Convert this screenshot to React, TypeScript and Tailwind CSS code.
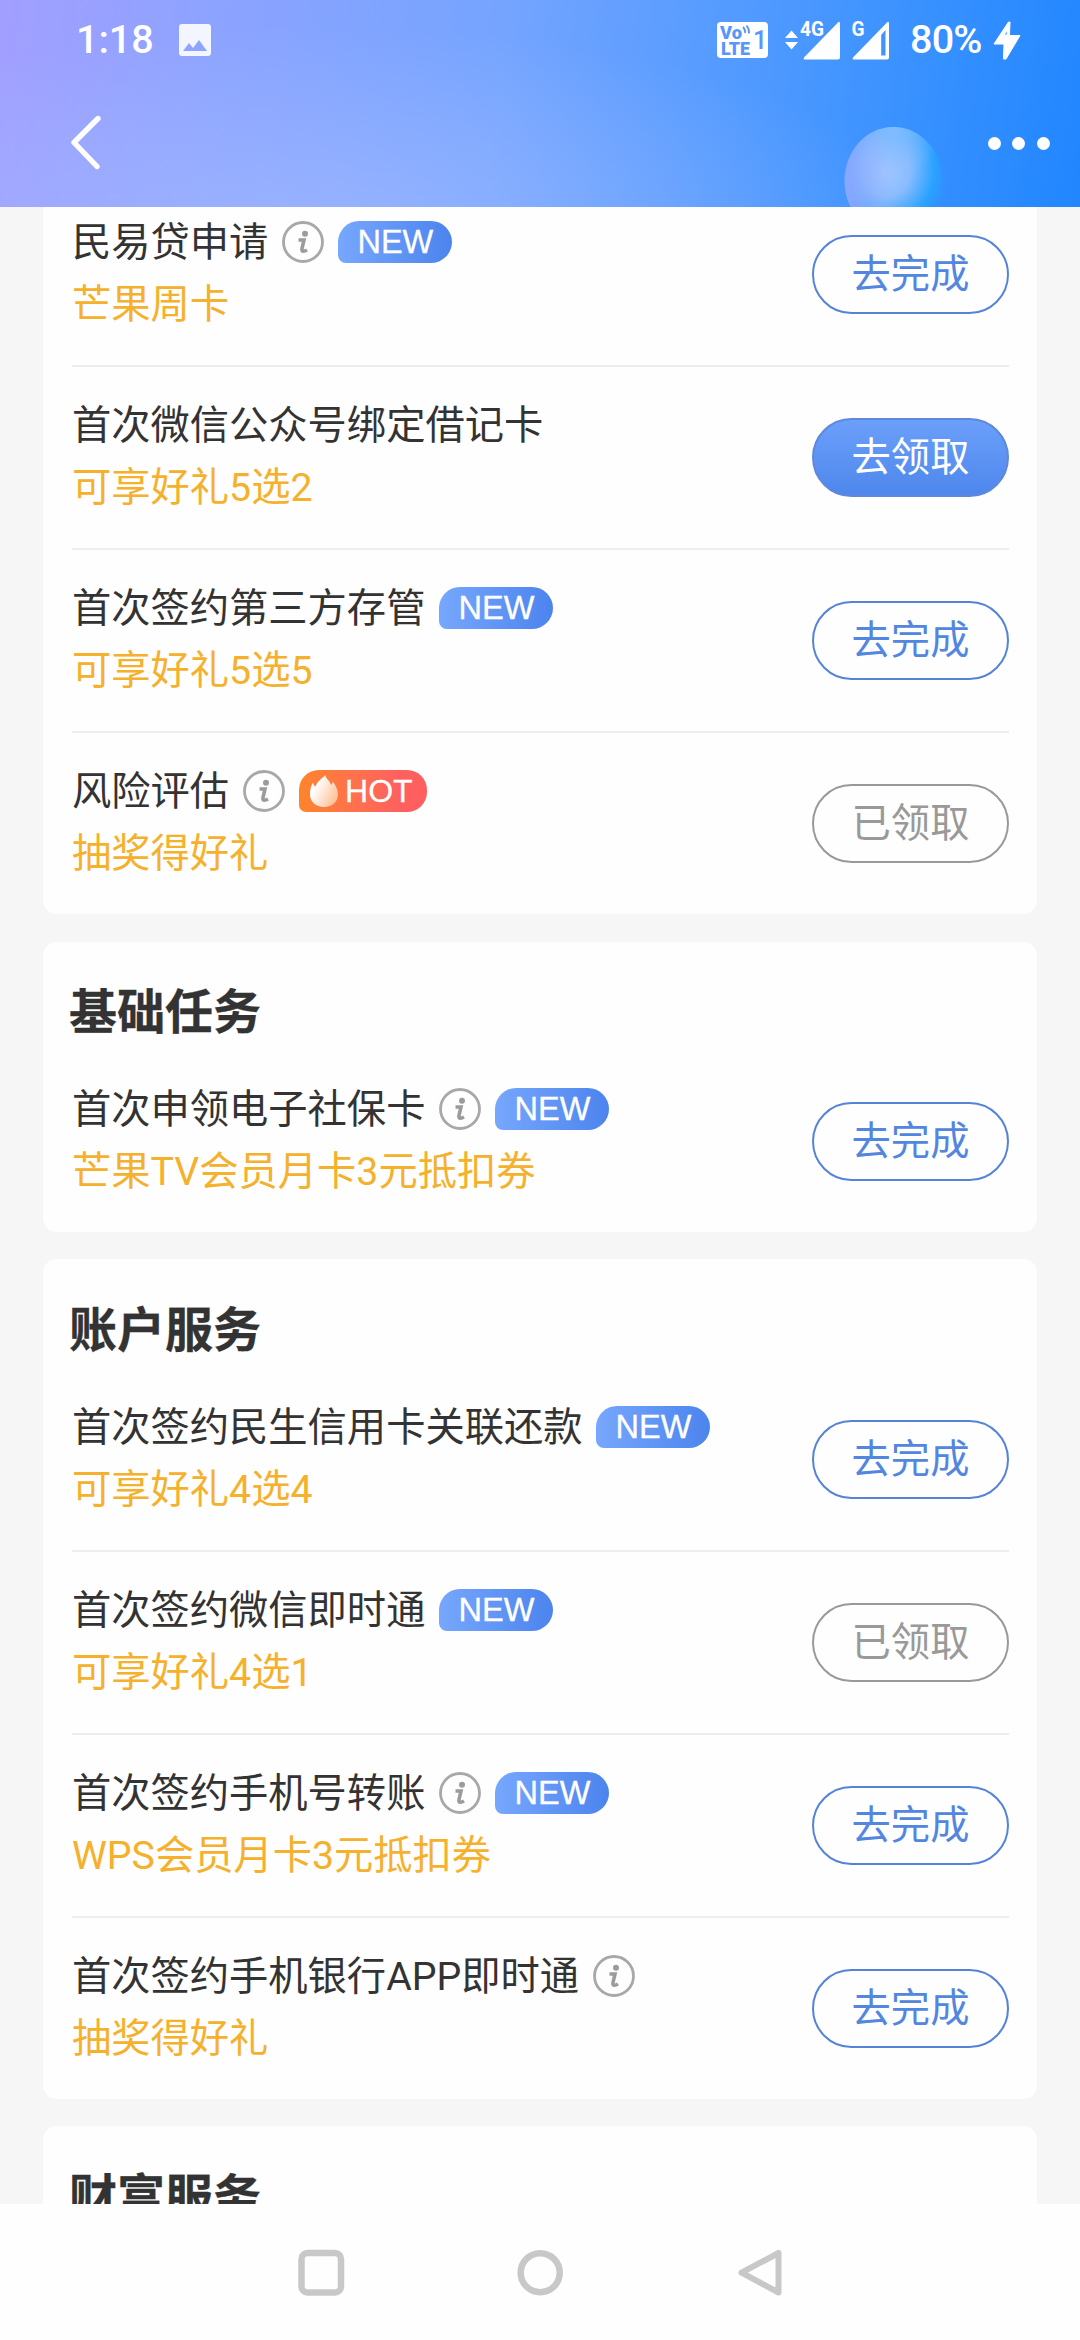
type Task = {
  title: string;
  reward: string;
  info?: boolean;
  tag?: "new" | "hot";
  state: "todo" | "claim" | "done";
};

const pinned: Task[] = [
  { title: "民易贷申请", reward: "芒果周卡", info: true, tag: "new", state: "todo" },
  { title: "首次微信公众号绑定借记卡", reward: "可享好礼5选2", state: "claim" },
  { title: "首次签约第三方存管", reward: "可享好礼5选5", tag: "new", state: "todo" },
  { title: "风险评估", reward: "抽奖得好礼", info: true, tag: "hot", state: "done" },
];

const basic: Task[] = [
  { title: "首次申领电子社保卡", reward: "芒果TV会员月卡3元抵扣券", info: true, tag: "new", state: "todo" },
];

const account: Task[] = [
  { title: "首次签约民生信用卡关联还款", reward: "可享好礼4选4", tag: "new", state: "todo" },
  { title: "首次签约微信即时通", reward: "可享好礼4选1", tag: "new", state: "done" },
  { title: "首次签约手机号转账", reward: "WPS会员月卡3元抵扣券", info: true, tag: "new", state: "todo" },
  { title: "首次签约手机银行APP即时通", reward: "抽奖得好礼", info: true, state: "todo" },
];

function StatusBar() {
  return (
    <div className="flex h-[80px] items-center pl-[76px] pr-[59px] font-[Roboto,sans-serif] text-[39.5px] font-medium leading-none text-white">
      <span>1:18</span>
      <svg className="ml-[25px]" width="32" height="32" viewBox="0 0 32 32">
        <path fillRule="evenodd" fill="#f4f6ff" d="M3 0h26a3 3 0 0 1 3 3v26a3 3 0 0 1-3 3H3a3 3 0 0 1-3-3V3a3 3 0 0 1 3-3zM4 27h24L20 16l-6 8-4-5z" />
      </svg>
      <svg className="ml-auto" width="51" height="36" viewBox="0 0 51 36">
        <rect width="51" height="36" rx="4" fill="#fff" />
        <g fill="#5796fd" fontFamily="Roboto, sans-serif" fontWeight="900">
          <text x="3" y="16.5" fontSize="18" textLength="22" lengthAdjust="spacingAndGlyphs">Vo</text>
          <text x="4" y="32.5" fontSize="18.500" textLength="29" lengthAdjust="spacingAndGlyphs">LTE</text>
          <text x="36" y="27" fontSize="25" fontWeight="500" textLength="12">1</text>
        </g>
        <path d="M26 5q2.500 2.500 2 6M29.500 3.500q3 3.500 2.500 8" stroke="#5796fd" strokeWidth="1.800" fill="none" />
      </svg>
      <svg className="ml-[17px] overflow-visible" width="56" height="42" viewBox="0 0 56 42" fill="#fff">
        <path d="M0 19l6.500-7.500L13 19zM0 23h13l-6.500 7.500z" />
        <path d="M53 3.500L19 38.500q-1 2 1 2h33q2 0 2-2V4q-.7-2-2-.5z" />
        <text x="15" y="17" fontSize="20" fontWeight="700" fontFamily="Roboto, sans-serif" textLength="24" lengthAdjust="spacingAndGlyphs">4G</text>
      </svg>
      <svg className="ml-[9px] overflow-visible" width="40" height="42" viewBox="0 0 40 42" fill="#fff">
        <path fillRule="evenodd" d="M37 3.500L3 38.500q-1 2 1 2h33q2 0 2-2V4q-.7-2-2-.5zM35.500 11v25.500H31.200V16z" />
        <text x="1.500" y="17" fontSize="20" fontWeight="700" fontFamily="Roboto, sans-serif" textLength="13" lengthAdjust="spacingAndGlyphs">G</text>
      </svg>
      <span className="ml-[20px] w-[71px] whitespace-nowrap tracking-[-0.8px]">80%</span>
      <svg className="ml-[12px]" width="28" height="39" viewBox="0 0 28 39">
        <path fillRule="evenodd" d="M15.500 1L1 23h10l-.5 15h2.500L27 14.500H16.500L17 1zM14.200 9v5h-3z" fill="#fff" stroke="#fff" strokeLinejoin="round" />
      </svg>
    </div>
  );
}

function Header() {
  return (
    <header className="relative h-[207px] shrink-0 overflow-hidden bg-[linear-gradient(98deg,#a29fff_0%,#8ca3ff_20%,#74a4ff_46%,#549bff_66%,#3891ff_84%,#2186ff_100%)]">
      {/* soft glow along the lower left */}
      <div className="absolute inset-0 bg-[radial-gradient(ellipse_600px_200px_at_320px_225px,rgba(172,190,255,0.55),rgba(168,190,255,0.32)_45%,rgba(150,185,255,0))]" />
      <svg className="absolute left-[843px] top-[126px]" width="101" height="110" viewBox="0 0 101 110">
        <defs>
          <radialGradient id="ball" cx="0.42" cy="0.4" r="0.62">
            <stop offset="0" stopColor="#a4c8ff" />
            <stop offset="0.4" stopColor="#8abcff" />
            <stop offset="0.8" stopColor="#2aa2ff" />
            <stop offset="1" stopColor="#2e92ff" />
          </radialGradient>
          <radialGradient id="tip" cx="0.5" cy="0" r="0.5">
            <stop offset="0" stopColor="#80bdff" />
            <stop offset="1" stopColor="#8cbcff" stopOpacity="0" />
          </radialGradient>
          <linearGradient id="tint" x1="0" y1="0.6" x2="1" y2="0.5">
            <stop offset="0" stopColor="#8ca5ff" />
            <stop offset="0.5" stopColor="#98b2ff" stopOpacity="0" />
          </linearGradient>
        </defs>
        <ellipse cx="50.500" cy="55" rx="49" ry="54" fill="url(#ball)" />
        <ellipse cx="50.500" cy="55" rx="49" ry="54" fill="url(#tip)" />
        <ellipse cx="50.500" cy="55" rx="49" ry="54" fill="url(#tint)" />
      </svg>
      <div className="relative">
        <StatusBar />
        <div className="flex h-[127px] items-center justify-between pl-[68px] pr-[30px]">
          <svg className="mb-1" width="34" height="56" viewBox="0 0 34 56" fill="none">
            <path d="M30 4.500L6 28.500L29 52.500" stroke="#fff" strokeWidth="5.400" strokeLinecap="round" strokeLinejoin="round" />
          </svg>
          <div className="flex gap-[11.700px]">
            <span className="size-[13px] rounded-full bg-white" />
            <span className="size-[13px] rounded-full bg-white" />
            <span className="size-[13px] rounded-full bg-white" />
          </div>
        </div>
      </div>
    </header>
  );
}

function InfoIcon() {
  return (
    <svg width="42" height="42" viewBox="0 0 42 42" fill="none">
      <circle cx="21" cy="21" r="19.500" stroke="#a8a8a8" strokeWidth="2.800" />
      <circle cx="23" cy="12.800" r="3" fill="#9b9b9b" />
      <path d="M16.500 19h5.500L20 27.500q-.5 2.700 1.500 2.700 1.500 0 3.500-1.200" stroke="#9b9b9b" strokeWidth="3.600" />
    </svg>
  );
}

function Tag({ kind }: { kind: "new" | "hot" }) {
  if (kind === "hot") {
    return (
      <span className="flex h-[42px] w-[128px] items-center rounded-[20px] rounded-bl-[7px] bg-linear-to-r from-[#ff8429] to-[#ff5f5f] to-80% pl-[11px] font-['Liberation_Sans',sans-serif] text-[32px] leading-none text-white [-webkit-text-stroke:0.3px]">
        <svg width="28" height="32" viewBox="0 0 28 32">
          <defs>
            <linearGradient id="flame" x1="0" y1="0" x2="1" y2="0.6">
              <stop offset="0.3" stopColor="#fff" />
              <stop offset="1" stopColor="#ffc39b" />
            </linearGradient>
          </defs>
          <path d="M15.500 0c-.5 3 5 6 5.500 10 1-.7 1.500-2 1.500-3.500C26 10 28 15 28 19.500 28 27 22 32 14 32S0 27 0 19.500C0 15 .8 11 3 7.500c.3 2 1 3.500 2.500 4C7 7 11 4 15.500 0z" fill="url(#flame)" />
        </svg>
        <span className="ml-[7px]">HOT</span>
      </span>
    );
  }
  return (
    <span className="flex h-[42px] w-[114px] items-center justify-center rounded-[21px] rounded-bl-[8px] bg-linear-to-r from-[#77a7fd] to-[#4c84ee] font-['Liberation_Sans',sans-serif] text-[32.500px] leading-none text-white [-webkit-text-stroke:0.3px]">
      NEW
    </span>
  );
}

const buttons = {
  todo: { label: "去完成", className: "border-[#5583d8] text-[#5286df]" },
  claim: { label: "去领取", className: "border-[#5f88dc] bg-linear-to-b from-[#6b9ffa] to-[#4e87ec] text-white" },
  done: { label: "已领取", className: "border-[#999] text-[#999]" },
};

function TaskRow({ task }: { task: Task }) {
  const button = buttons[task.state];
  return (
    <li className="flex items-center justify-between border-b-2 border-[#ededed] last:border-b-0">
      <div className="h-[181px] pt-[27px]">
        <div className="flex h-[62px] items-center gap-[14px] text-[#333]">
          <span className="whitespace-nowrap pt-[3px]">{task.title}</span>
          {task.info && <InfoIcon />}
          {task.tag && <Tag kind={task.tag} />}
        </div>
        <div className="flex h-[61px] items-center whitespace-nowrap pt-[5px] text-[#f5b02c]">{task.reward}</div>
      </div>
      <button className={`flex h-[79px] w-[197px] shrink-0 items-center justify-center rounded-full border-2 pt-[2px] ${button.className}`}>
        {button.label}
      </button>
    </li>
  );
}

function Card({ title, tasks }: { title?: string; tasks: Task[] }) {
  return (
    <section className="rounded-[14px] bg-[#fefefe] pl-[29px] pr-[28px]">
      {title && (
        <h2 className="-ml-[3px] flex h-[109.400px] items-center pt-[34px] text-[48px] font-bold text-[#333] [-webkit-text-stroke:0.3px]">{title}</h2>
      )}
      <ul>
        {tasks.map((task) => (
          <TaskRow key={task.title} task={task} />
        ))}
      </ul>
    </section>
  );
}

function NavBar() {
  return (
    <nav className="flex h-[136px] shrink-0 items-center justify-center gap-[171px] bg-[#fefefe]">
      <svg width="48" height="48" viewBox="0 0 48 48" fill="none" stroke="#c8c8c8" strokeWidth="6.500">
        <rect x="4.500" y="5" width="39.500" height="39.500" rx="6" />
      </svg>
      <svg width="48" height="48" viewBox="0 0 48 48" fill="none" stroke="#c8c8c8" strokeWidth="6.500">
        <circle cx="24.200" cy="24.700" r="19.500" />
      </svg>
      <svg width="48" height="48" viewBox="0 0 48 48" fill="none" stroke="#c8c8c8" strokeWidth="6" strokeLinejoin="round">
        <path d="M43.500 5V44.500L6.500 24.700z" />
      </svg>
    </nav>
  );
}

export default function App() {
  return (
    <div className="flex h-[2340px] w-[1080px] flex-col overflow-hidden bg-[#f6f6f6] font-[Roboto,'Noto_Sans_CJK_SC',sans-serif] text-[39.270px] leading-none">
      <Header />
      <main className="min-h-0 flex-1 overflow-hidden px-[43px]">
        {/* the list is scrolled a little way under the header */}
        <div className="-mt-[23px] flex flex-col gap-[27.500px]">
          <Card tasks={pinned} />
          <Card title="基础任务" tasks={basic} />
          <Card title="账户服务" tasks={account} />
          <Card title="财富服务" tasks={[]} />
        </div>
      </main>
      <NavBar />
    </div>
  );
}
